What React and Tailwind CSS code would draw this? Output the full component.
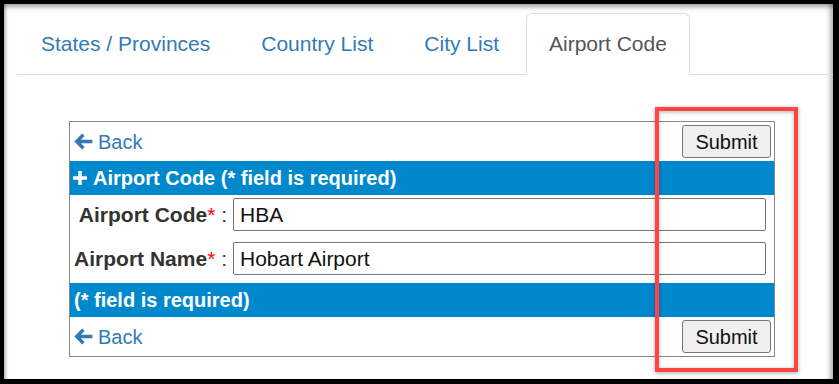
import React from 'react'

const ArrowLeft = () => (
  <svg width="19" height="17" viewBox="0 0 19 17" className="shrink-0">
    <path d="M8.2 0.6 L10.6 3 L6.9 6.7 L18.4 6.7 L18.4 10.3 L6.9 10.3 L10.6 14 L8.2 16.4 L0.3 8.5 Z" fill="#337ab7" />
  </svg>
)

const Plus = () => (
  <svg width="14" height="14" viewBox="0 0 14 14" className="shrink-0">
    <path d="M5.2 0 H8.8 V5.2 H14 V8.8 H8.8 V14 H5.2 V8.8 H0 V5.2 H5.2 Z" fill="#ffffff" />
  </svg>
)

function ActionRow() {
  return (
    <div className="flex items-center justify-between h-[39px] pl-[4px] pr-[3px]">
      <a href="#" className="flex items-center gap-[5px] text-[20px] leading-none text-[#337ab7]">
        <ArrowLeft />
        <span>Back</span>
      </a>
      <button type="button" className="w-[89px] h-[33px] flex items-center justify-center border border-[#767676] rounded-[3px] bg-[#efefef] text-[20px] text-[#111]">
        Submit
      </button>
    </div>
  )
}

function Field({ label, value }) {
  return (
    <div className="flex items-center">
      <label className="w-[157px] shrink-0 text-right text-[21px] text-[#333] whitespace-nowrap">
        <span className="font-bold">{label}</span>
        <span className="text-[#ff0000]">*</span>
        <span> :</span>
      </label>
      <input
        type="text"
        defaultValue={value}
        className="ml-[6px] mr-[8px] flex-1 h-[33px] border border-[#767676] rounded-[2px] px-[6px] text-[21px] text-[#111] outline-none"
      />
    </div>
  )
}

export default function App() {
  const tabs = ['States / Provinces', 'Country List', 'City List']
  return (
    <div className="w-[839px] h-[384px] bg-black pt-[4px] pl-[4px] overflow-hidden relative" style={{ fontFamily: '"Liberation Sans", Arial, sans-serif' }}>
      <div className="w-[829px] h-[375px] bg-white shadow-[inset_0_6px_5px_-3px_rgba(0,0,0,0.35),inset_-6px_0_5px_-3px_rgba(0,0,0,0.3),inset_4px_0_3px_-2px_rgba(0,0,0,0.25)]">
        <ul className="flex gap-[3px] ml-[13px] pt-[9px] border-b border-[#dddddd]">
          {tabs.map((t) => (
            <li key={t} className="-mb-px">
              <a href="#" className="block px-[23px] py-[15px] leading-[30px] text-[21px] text-[#337ab7] border border-transparent whitespace-nowrap">
                {t}
              </a>
            </li>
          ))}
          <li className="-mb-px">
            <a href="#" className="block px-[22px] py-[15px] leading-[30px] text-[21px] text-[#555555] bg-white border border-[#dddddd] border-b-white rounded-t-[6px] whitespace-nowrap">
              Airport Code
            </a>
          </li>
        </ul>

        <div className="ml-[65px] mt-[46px] w-[706px] border border-[#888888]">
          <ActionRow />
          <div className="flex items-center gap-[6px] h-[34px] bg-[#0088cc] pl-[3px] text-white font-bold text-[20px]">
            <Plus />
            <span>Airport Code (* field is required)</span>
          </div>
          <div className="flex flex-col gap-[11px] pt-[3px] pb-[8px]">
            <Field label="Airport Code" value="HBA" />
            <Field label="Airport Name" value="Hobart Airport" />
          </div>
          <div className="flex items-center h-[34px] bg-[#0088cc] pl-[4px] text-white font-bold text-[20px]">
            (* field is required)
          </div>
          <ActionRow />
        </div>
      </div>

      <div className="absolute left-[655px] top-[107px] w-[143px] h-[265px] border-[4px] border-[#ff4444] shadow-[0_1px_4px_rgba(0,0,0,0.35),inset_0_1px_4px_rgba(0,0,0,0.3)] pointer-events-none" />
    </div>
  )
}
